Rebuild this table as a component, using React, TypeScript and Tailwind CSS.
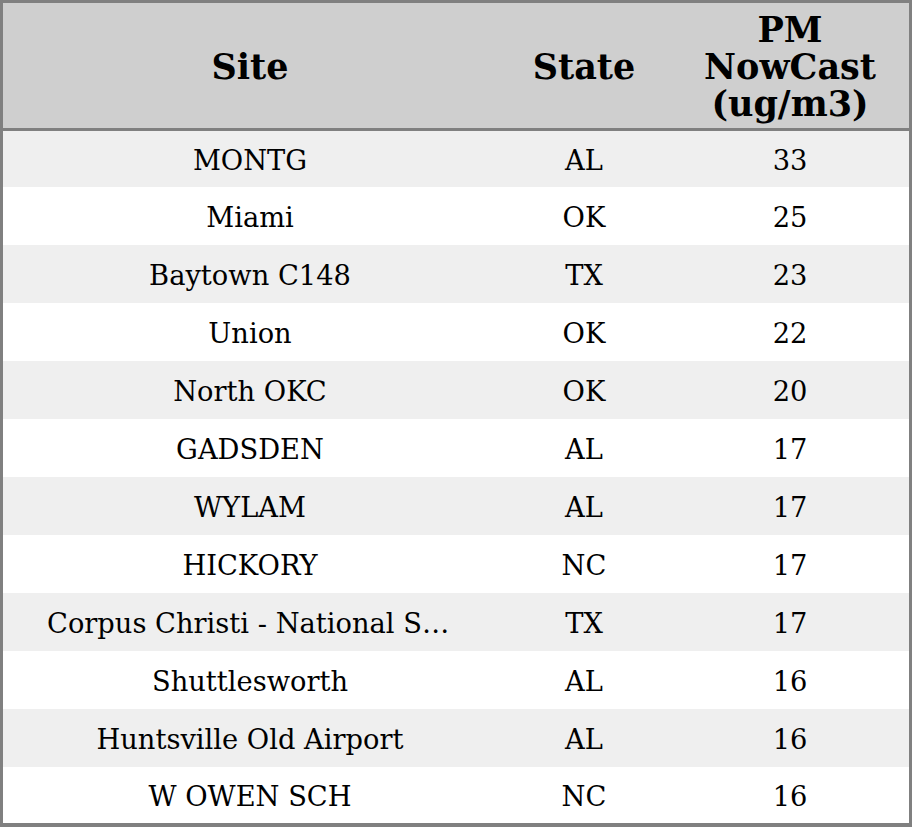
const rows: [string, string, string][] = [
  ['MONTG', 'AL', '33'],
  ['Miami', 'OK', '25'],
  ['Baytown C148', 'TX', '23'],
  ['Union', 'OK', '22'],
  ['North OKC', 'OK', '20'],
  ['GADSDEN', 'AL', '17'],
  ['WYLAM', 'AL', '17'],
  ['HICKORY', 'NC', '17'],
  ['Corpus Christi - National Seashore', 'TX', '17'],
  ['Shuttlesworth', 'AL', '16'],
  ['Huntsville Old Airport', 'AL', '16'],
  ['W OWEN SCH', 'NC', '16'],
];

export default function App() {
  return (
    <div
      className="w-[912px] h-[827px] overflow-hidden border-[3px] border-b-4 border-[#808080] bg-white text-black"
      style={{ fontFamily: '"DejaVu Serif", serif' }}
    >
      {/* Header */}
      <div className="grid grid-cols-[494px_174px_1fr] h-[128px] pt-[2px] bg-[#cfcfcf] border-b-[3px] border-[#808080] text-[35px] font-bold leading-[37px]">
        <div className="flex items-center justify-center">Site</div>
        <div className="flex items-center justify-center">State</div>
        <div className="flex items-center justify-center text-center">
          PM
          <br />
          NowCast
          <br />
          (ug/m3)
        </div>
      </div>

      {/* Rows */}
      {rows.map(([site, state, pm], i) => (
        <div
          key={i}
          className={
            'grid grid-cols-[494px_174px_1fr] items-center pt-[4px] text-[27.3px] ' +
            (i % 2 === 0 ? 'bg-[#efefef] ' : 'bg-white ') +
            (i === 0 || i === rows.length - 1 ? 'h-[56px]' : 'h-[58px]')
          }
        >
          <div className="px-[44px] truncate text-center">{site}</div>
          <div className="text-center">{state}</div>
          <div className="text-center">{pm}</div>
        </div>
      ))}
    </div>
  );
}
